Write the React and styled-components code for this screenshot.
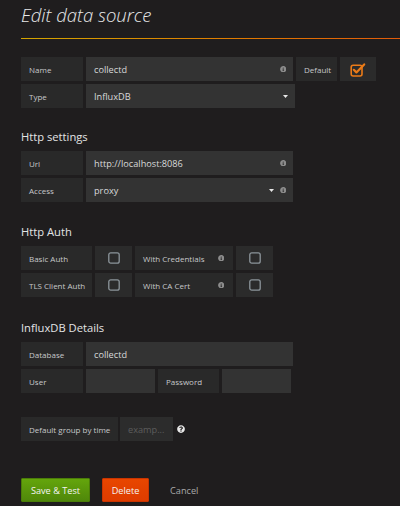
import React from "react";
import styled, { createGlobalStyle } from "styled-components";
import { FaInfoCircle, FaQuestionCircle } from "react-icons/fa";

const GlobalStyle = createGlobalStyle`
  html, body { margin: 0; padding: 0; background: #1f1d1e; }
  body { font-family: "Open Sans", "Liberation Sans", sans-serif; }
  * { box-sizing: border-box; }
`;

const Page = styled.div`
  width: 400px;
  min-height: 506px;
  padding-left: 21px;
  background: #1f1d1e;
  overflow: hidden;
`;

const Header = styled.div`
  padding-top: 3px;
  padding-bottom: 11px;
  border-bottom: 1px solid transparent;
  border-image: linear-gradient(to right, #d3a500 0%, #e07800 60%, #e05a0a 100%) 1;
  margin-right: -2px;
`;

const Title = styled.h1`
  margin: 0;
  font-size: 18.5px;
  line-height: 24px;
  font-style: italic;
  font-weight: 300;
  color: #e8e9ea;
`;

const Heading = styled.h3`
  margin: ${(p) => p.$top}px 0 7px;
  font-size: 11.2px;
  line-height: 14px;
  font-weight: 400;
  color: #e3e4e5;
`;

const Rows = styled.div`
  display: flex;
  flex-direction: column;
  gap: 3px;
  margin-top: ${(p) => p.$top || 0}px;
`;

const Row = styled.div`
  display: flex;
  align-items: center;
  gap: ${(p) => (p.$gap != null ? p.$gap : 3)}px;
  height: 24px;
  margin-top: ${(p) => p.$top || 0}px;
`;

const Label = styled.div`
  width: ${(p) => p.$w}px;
  height: 24px;
  flex: none;
  display: flex;
  align-items: center;
  justify-content: space-between;
  padding: 0 9px 0 8px;
  background: #292929;
  color: #c6c8ca;
  font-size: 8px;
  white-space: nowrap;
`;

const Field = styled.div`
  width: ${(p) => p.$w}px;
  height: 24px;
  flex: none;
  display: flex;
  align-items: center;
  gap: 6px;
  padding: 0 7px 0 8px;
  background: ${(p) => (p.$dim ? "#2c2c2c" : "#333333")};
  color: ${(p) => (p.$placeholder ? "#5c5c5c" : "#d8d9da")};
  font-size: 9.2px;
  white-space: nowrap;
`;

const FieldText = styled.span`
  flex: 1;
`;

const CheckCell = styled.div`
  width: ${(p) => p.$w}px;
  height: 24px;
  flex: none;
  display: flex;
  align-items: center;
  justify-content: center;
  background: #2b2b2b;
`;

const InfoGlyph = styled(FaInfoCircle)`
  width: 6.5px;
  height: 6.5px;
  color: #8c8c8c;
  flex: none;
`;

const HelpGlyph = styled(FaQuestionCircle)`
  width: 8px;
  height: 8px;
  color: #e8e8e8;
  margin-left: 2px;
  flex: none;
`;

const Caret = () => (
  <svg width="5" height="3" viewBox="0 0 5 3" style={{ flex: "none" }}>
    <polygon points="0,0 5,0 2.5,3" fill="#e8e8e8" />
  </svg>
);

const Box = ({ checked }) =>
  checked ? (
    <svg width="16" height="15" viewBox="0 0 16 15">
      <rect x="1.2" y="3.2" width="10.8" height="10.8" rx="2" fill="none" stroke="#eb7b18" strokeWidth="1.6" />
      <path d="M3.8 7.8 L6.4 10.4 L14.2 2.4" fill="none" stroke="#eb7b18" strokeWidth="2.2" strokeLinecap="round" strokeLinejoin="round" />
    </svg>
  ) : (
    <svg width="12" height="12" viewBox="0 0 12 12">
      <rect x="0.8" y="0.8" width="10.4" height="10.4" rx="2" fill="none" stroke="#8c959b" strokeWidth="1.3" />
    </svg>
  );

const Buttons = styled.div`
  display: flex;
  align-items: center;
  margin-top: 37px;
  height: 24px;
`;

const Button = styled.button`
  height: 24px;
  width: ${(p) => p.$w}px;
  margin-right: ${(p) => p.$mr || 0}px;
  padding: 0;
  border: 1px solid ${(p) => (p.$variant === "danger" ? "#c93400" : "#4b7d08")};
  border-radius: 1px;
  font-family: inherit;
  font-size: 9.2px;
  color: #f4f4f4;
  background: ${(p) =>
    p.$variant === "danger"
      ? "linear-gradient(#e84600, #de3c00)"
      : "linear-gradient(#64a50c, #4f870a)"};
`;

const LinkButton = styled.span`
  font-size: 9.2px;
  color: #a9a9a9;
`;

export default function App() {
  return (
    <>
      <GlobalStyle />
      <Page>
        <Header>
          <Title>Edit data source</Title>
        </Header>

        <Rows $top={18}>
          <Row>
            <Label $w={62}>Name</Label>
            <Field $w={207}>
              <FieldText>collectd</FieldText>
              <InfoGlyph />
            </Field>
            <Label $w={41}>Default</Label>
            <CheckCell $w={36}>
              <Box checked />
            </CheckCell>
          </Row>
          <Row>
            <Label $w={62}>Type</Label>
            <Field $w={209}>
              <FieldText>InfluxDB</FieldText>
              <Caret />
            </Field>
          </Row>
        </Rows>

        <Heading $top={22}>Http settings</Heading>
        <Rows>
          <Row>
            <Label $w={62}>Url</Label>
            <Field $w={207}>
              <FieldText>http://localhost:8086</FieldText>
              <InfoGlyph />
            </Field>
          </Row>
          <Row>
            <Label $w={62}>Access</Label>
            <Field $w={207}>
              <FieldText>proxy</FieldText>
              <Caret />
              <InfoGlyph />
            </Field>
          </Row>
        </Rows>

        <Heading $top={23}>Http Auth</Heading>
        <Rows>
          <Row>
            <Label $w={71}>Basic Auth</Label>
            <CheckCell $w={37}>
              <Box />
            </CheckCell>
            <Label $w={98}>
              With Credentials
              <InfoGlyph />
            </Label>
            <CheckCell $w={37}>
              <Box />
            </CheckCell>
          </Row>
          <Row>
            <Label $w={71}>TLS Client Auth</Label>
            <CheckCell $w={37}>
              <Box />
            </CheckCell>
            <Label $w={98}>
              With CA Cert
              <InfoGlyph />
            </Label>
            <CheckCell $w={37}>
              <Box />
            </CheckCell>
          </Row>
        </Rows>

        <Heading $top={24}>InfluxDB Details</Heading>
        <Rows>
          <Row>
            <Label $w={62}>Database</Label>
            <Field $w={207}>
              <FieldText>collectd</FieldText>
            </Field>
          </Row>
          <Row>
            <Label $w={62}>User</Label>
            <Field $w={69} />
            <Label $w={61}>Password</Label>
            <Field $w={69} />
          </Row>
        </Rows>

        <Row $top={24} $gap={2}>
          <Label $w={97}>Default group by time</Label>
          <Field $w={53} $dim $placeholder>
            examp...
          </Field>
          <HelpGlyph />
        </Row>

        <Buttons>
          <Button $w={69} $mr={12}>Save &amp; Test</Button>
          <Button $w={47} $mr={21} $variant="danger">Delete</Button>
          <LinkButton>Cancel</LinkButton>
        </Buttons>
      </Page>
    </>
  );
}
